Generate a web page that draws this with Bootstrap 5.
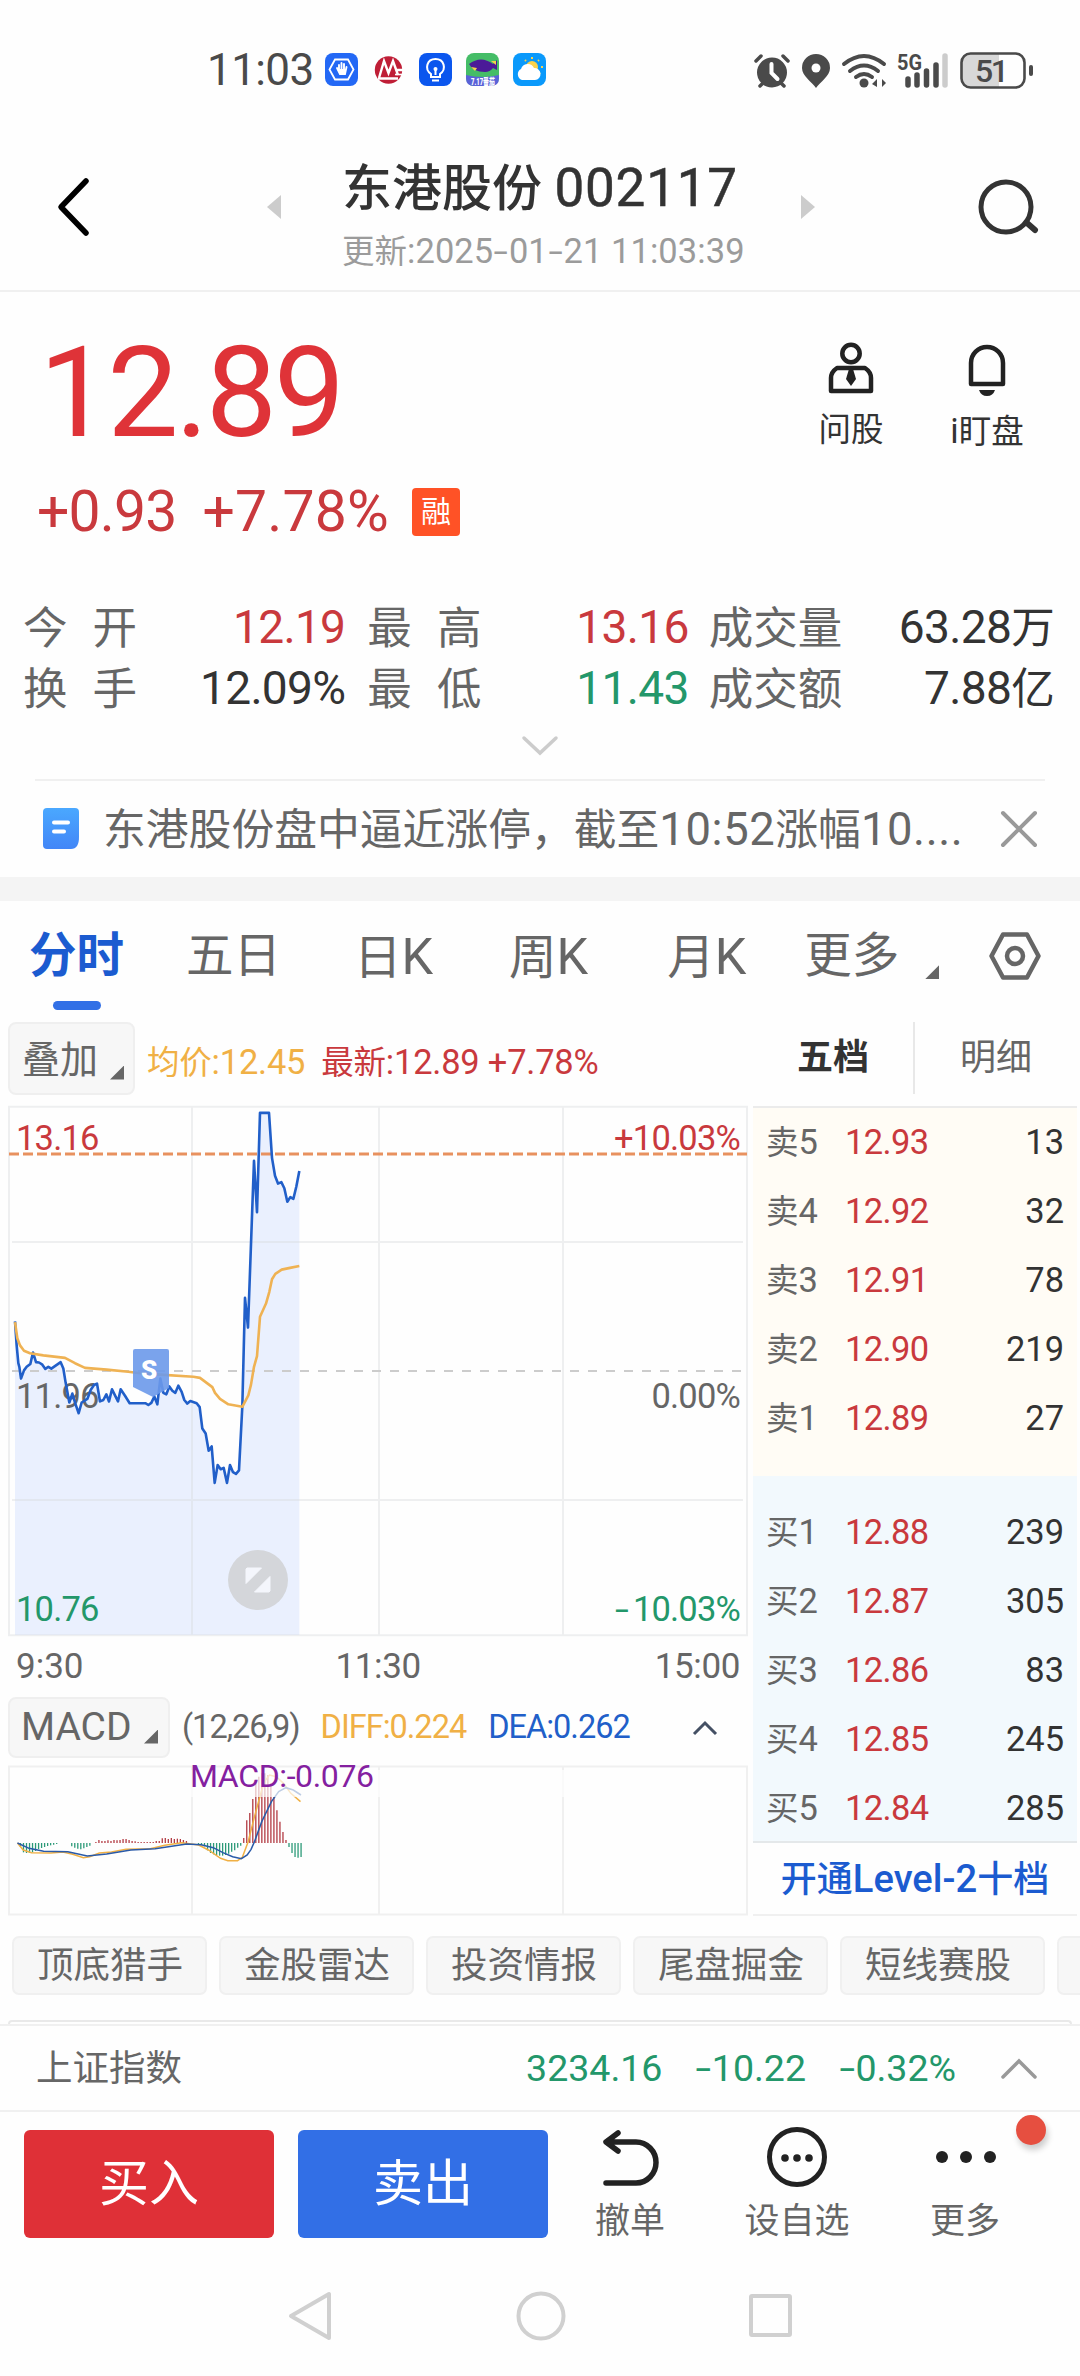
<!DOCTYPE html>
<html lang="zh-CN">
<head>
<meta charset="utf-8">
<meta name="viewport" content="width=device-width, initial-scale=1">
<title>东港股份 002117</title>
<link rel="stylesheet" href="https://cdn.jsdelivr.net/npm/bootstrap@5.3.0/dist/css/bootstrap.min.css">
<style>
:root{--up:#c9393d;--down:#23976a;--ink:#333;--sub:#666;--blue:#1b5bd0;--line:#f0f0f0}
html,body{width:1080px;height:2376px;overflow:hidden}
body{font-family:Roboto,"Noto Sans CJK SC",sans-serif;color:var(--ink);background:#fefefe;font-size:36px;line-height:1;white-space:nowrap}
svg{display:block;flex:none;overflow:visible}
.num{font-size:1.06em}
.hy{display:inline-block;transform:scaleX(1.5);margin:0 3px}
.up{color:var(--up)}.down{color:var(--down)}.sub{color:var(--sub)}
.status{height:139px;padding:0 47px 0 207px}
.clock{font-size:44px;color:#4a4a4a;width:118px;letter-spacing:-.6px}
.head{height:153px;border-bottom:2px solid var(--line);padding:0 41px 0 56px}
.titles{width:400px}
.title-main{font-size:50px;height:58px;line-height:58px;font-weight:500}
.title-main .num{font-weight:400;letter-spacing:.8px;-webkit-text-stroke:.5px var(--ink)}
.title-time{font-size:32.5px;height:40px;line-height:40px;color:#9b9b9b;margin-top:14px}
.title-time .num{letter-spacing:.1px}
.quote{height:287px;padding:46px 58px 0 41px}
.last-price{font-size:127px;line-height:110px;height:110px;color:#df3338;letter-spacing:-3.2px;margin-left:-2px}
.change{font-size:57px;height:60px;line-height:60px;margin-top:34px}
.tag-rong{width:48px;height:48px;line-height:48px;border-radius:4px;background:#ff5226;color:#fff;font-size:30px;text-align:center}
.tool{font-size:32.5px;width:96px}
.tool-label{margin-top:10px}
.stats{height:126px;padding:0 26px 0 25px;margin-top:18px}
.stat-line{height:61px}
.cell-a{width:321px;margin-right:24px}.cell-b{width:320px;margin-right:22px}.cell-c{width:344px}
.stats .key{font-size:44.5px;color:var(--sub);word-spacing:14px;margin-left:-2px;padding-top:3px}
.stats .val{font-size:43.5px;letter-spacing:-.7px}
.expand{height:56px;padding-top:12px}
.news{height:98px;margin:0 35px;border-top:2px solid var(--line);padding:0 8px}
.news-text{font-size:42.8px;color:#666;width:870px;margin-left:24px;padding-top:2px}
.news-text .num{letter-spacing:.6px}
.band{height:24px;background:#f4f4f4}
.ktabs{height:121px;padding:0 39px 0 29px;font-size:47.5px;color:var(--sub)}
.ktabs>div{height:110px;line-height:111px}
.ktabs .on{color:var(--blue);font-weight:700;position:relative}
.ktabs .on::after{content:"";position:absolute;left:24px;bottom:1px;width:48px;height:9px;border-radius:5px;background:#3270e6}
.chart-col{width:753px}
.book-col{width:324px}
.drop{background:#f7f7f7;border:2px solid #efefef;border-radius:8px;color:var(--sub);letter-spacing:0}
.info{height:84px}
.info .drop{width:127px;height:73px;margin:0 12px 0 8px;font-size:38px;padding:2px 9px 0 12px}
.tri{width:14px;height:14px;background:#666;clip-path:polygon(100% 0,100% 100%,0 100%)}
.axis{height:60px;font-size:35px;color:var(--sub);padding:0 13px 0 16px}
.macd-bar{height:69px;padding-bottom:6px;font-size:32.5px;letter-spacing:-1px}
.macd-bar .drop{width:162px;height:61px;margin-left:8px;font-size:39px;padding:0 10px 0 11px}
.book-tabs{height:84px;font-size:36px}
.book-tabs>div{width:50%;height:72px}
.sells{height:370px;background:#fffcf5;border-top:2px solid #ebebeb;box-sizing:border-box}
.buys{height:367px;background:#f2f9fd;border-bottom:2px solid #e4e8ea;padding-top:22px}
.lv{height:69px;padding:0 13px 0 13px;font-size:32.5px}
.lv .k{width:79px;color:var(--sub)}.lv .p{letter-spacing:-.6px;color:var(--up)}
.level2{height:73px;border-bottom:2px solid var(--line);font-size:36px;color:var(--blue);font-weight:500;padding-top:2px}
.pills{height:104px;padding:20px 0 0 12px;gap:12px;overflow:hidden}
.pill{flex:none;width:195px;height:59px;background:#f7f7f7;border:2px solid #f0f0f0;border-radius:7px;font-size:36.5px;color:var(--sub);padding-left:23px;line-height:56px}
.pill.wide{width:205px}
.sheet{height:4px;margin:0 8px;border:2px solid #e9e9e9;border-bottom:0;border-radius:8px 8px 0 0}
.index{height:88px;border-top:2px solid var(--line);border-bottom:2px solid var(--line);padding:2px 43px 0 36px}
.index .quote-row{gap:33px;margin-right:45px;font-size:37.5px}
.actions{height:145px;padding:18px 0 0 24px}
.trade{width:250px;height:108px;border-radius:6px;font-size:50px;color:#fff;border:0;line-height:105px;padding:0}
.act{width:168px;font-size:35px;color:var(--sub);position:relative}
.act:first-of-type{width:166px}
.act-label{margin-top:12px;margin-left:-2px}
.reddot{position:absolute;width:30px;height:30px;border-radius:50%;background:#e64f40;left:134px;top:-15px;box-shadow:2px 5px 6px #0003}
.act svg{height:62px}
.sysnav{height:118px}
svg text{font-family:Roboto,"Noto Sans CJK SC",sans-serif}
</style>
<script src="https://cdn.jsdelivr.net/npm/bootstrap@5.3.0/dist/js/bootstrap.bundle.min.js"></script>
</head>
<body>

<!-- system status -->
<div class="status d-flex align-items-center">
  <div class="clock">11:03</div>
  <svg width="221" height="34" viewBox="0 0 221 34">
    <rect width="33" height="33" rx="8" fill="#2368f5"/><path d="M10 6.500h13l5.500 10-5.500 10H10l-5.500-10z" fill="none" stroke="#fff" stroke-width="1.800"/><path d="M14 18v-6M16.500 18v-8M19 18v-7M12 15l3 6h5l1.500-7" stroke="#fff" stroke-width="1.900" fill="none" stroke-linecap="round"/><path d="M13.500 16h6.500v5h-5z" fill="#fff"/>
    <circle cx="63.500" cy="17" r="13.700" fill="#bf1e36"/><path d="M54 25l5-17 4.500 12L68 8l5 14M53 25.500h20M71 17h7" fill="none" stroke="#fff" stroke-width="2.400"/><path d="M70 21.500h8" stroke="#fff" fill="none" stroke-width="1.600"/>
    <rect x="94" width="33" height="33" rx="8" fill="#0b56ee"/><path d="M106 21c-7-5-4-15 4.500-15s11.500 10 4.500 15v3h-9zM107 27.500h7M110.500 16v6" fill="none" stroke="#fff" stroke-width="2"/><circle cx="110.500" cy="16" r="2" fill="#fff"/>
    <rect x="141" width="33" height="33" rx="8" fill="#45bd67"/><path d="M141 22q16 4 33 0v3q0 8-8 8h-17q-8 0-8-8z" fill="#5a62d8"/><path d="M144 11q12-9 24 0l4-4v10l-4-2q-3 4-8 4-12 0-16-8z" fill="#4b1a98"/><path d="M146 14l6 1-2 3zM166 8h5v4z" fill="#f4cf4c"/><text x="146" y="32" font-size="9" font-weight="900" fill="#fff" textLength="24" lengthAdjust="spacingAndGlyphs">7.17番茄</text>
    <rect x="188" width="33" height="33" rx="8" fill="#0a99fb"/><circle cx="207" cy="14" r="6" fill="#fbd34c"/><path d="M207 4v2M200 7l1 1M214 7l-1 1M216 14h2M214 20l1 1" stroke="#fbd34c" stroke-width="2"/><path d="M197 27a6 6 0 0 1-1-11 7 7 0 0 1 13-1 6 6 0 1 1 1 12z" fill="#fff"/>
  </svg>
  <svg class="ms-auto" width="280" height="38" viewBox="753 49 280 38">
    <g fill="none" stroke="#4a4a4a" stroke-linecap="round">
      <circle cx="772" cy="70.500" r="15" fill="#4a4a4a" stroke="none"/><path d="M756 59l5-5M788 59l-5-5M760 84l4-4M784 84l-4-4" stroke-width="3.500"/><path d="M771.500 62v9l6 6" stroke="#fff" stroke-width="4"/>
      <path d="M816 86c-4-6-14-12-14-20a14 14 0 0 1 28 0c0 8-10 14-14 20z" fill="#4a4a4a" stroke="none"/><circle cx="816" cy="66" r="4.500" fill="#fff" stroke="none"/>
      <path d="M844 62q20-16 40 0M850 69q14-11 28 0M856 75q8-6 16 0" stroke-width="4"/><circle cx="864" cy="81" r="4.500" fill="#4a4a4a" stroke="none"/><path d="M872 82l5-5v8zM886 81l-4-4v8z" fill="#4a4a4a" stroke="none"/>
      <path d="M908 77v6M917 73v10M926.500 69v14M936 63v20" stroke-width="5.500"/><path d="M945 54v29" stroke="#ccc" stroke-width="5.500"/>
      <path d="M970 52h29v33h-29q-8 0-8-8V60q0-8 8-8z" fill="#d8d8d8" stroke="none"/><rect x="961.500" y="51.500" width="63" height="34" rx="9" stroke-width="2.600"/><path d="M1031 65v7" stroke-width="4"/>
    </g>
    <text x="897" y="67.500" font-size="22" font-weight="700" fill="#4a4a4a" textLength="25" lengthAdjust="spacingAndGlyphs">5G</text>
    <text x="975" y="80" font-size="32" font-weight="500" fill="#4a4a4a" textLength="34">51</text>
  </svg>
</div>

<!-- title bar -->
<div class="head d-flex align-items-center">
  <svg width="34" height="62" viewBox="0 0 34 62" style="margin-bottom:16px"><path d="M30 5L5 31l25 26" fill="none" stroke="#000" stroke-width="5.500" stroke-linecap="round" stroke-linejoin="round"/></svg>
  <svg class="mb-3" width="14" height="24" viewBox="0 0 14 24" style="margin-left:177px"><path d="M14 0v24L0 12z" fill="#ccc"/></svg>
  <div class="titles" style="margin-left:61px">
    <div class="title-main">东港股份 <span class="num">002117</span></div>
    <div class="title-time">更新<span class="num">:2025<span class="hy">-</span>01<span class="hy">-</span>21 11:03:39</span></div>
  </div>
  <svg class="mb-3" width="14" height="24" viewBox="0 0 14 24" style="margin-left:59px"><path d="M0 0v24l14-12z" fill="#ccc"/></svg>
  <svg class="ms-auto mb-3" width="62" height="56" viewBox="0 0 62 56"><circle cx="29" cy="28" r="25" fill="none" stroke="#333" stroke-width="5"/><path d="M50 44l8 7" stroke="#333" stroke-width="6" stroke-linecap="round"/></svg>
</div>

<!-- last price -->
<div class="quote d-flex justify-content-between">
  <div>
    <div class="last-price">12.89</div>
    <div class="change up d-flex align-items-center"><span style="letter-spacing:-.8px;margin-left:-4px">+0.93</span><span style="letter-spacing:.2px;margin-left:26px">+7.78%</span><span class="tag-rong" style="margin-left:23px">融</span></div>
  </div>
  <div class="d-flex" style="gap:40px;margin-right:-13px">
    <div class="tool d-flex flex-column align-items-center">
      <svg width="48" height="66" viewBox="0 0 48 66"><g fill="none" stroke="#222" stroke-width="4.500"><circle cx="24" cy="15.500" r="8.700"/><path d="M10 30h28q6 4 6 10v13H4V40q0-6 6-10z" stroke-linejoin="round"/></g><path d="M22 31h4l3 10-5 7-5-7z" fill="#222"/></svg>
      <div class="tool-label">问股</div>
    </div>
    <div class="tool d-flex flex-column align-items-center">
      <svg width="48" height="66" viewBox="0 0 48 66"><path d="M8 46V25a16 16 0 0 1 32 0v21z" fill="none" stroke="#222" stroke-width="4.500" stroke-linejoin="round"/><path d="M16 52h16q-2 6-8 6t-8-6z" fill="#222"/></svg>
      <div class="tool-label"><span class="num">i</span>盯盘</div>
    </div>
  </div>
</div>

<!-- key figures -->
<div class="stats">
  <div class="stat-line d-flex align-items-center">
    <div class="cell-a d-flex justify-content-between"><span class="key">今 开</span><span class="val up"><span class="num">12.19</span></span></div>
    <div class="cell-b d-flex justify-content-between"><span class="key">最 高</span><span class="val up"><span class="num">13.16</span></span></div>
    <div class="cell-c d-flex justify-content-between"><span class="key">成交量</span><span class="val"><span class="num">63.28</span>万</span></div>
  </div>
  <div class="stat-line d-flex align-items-center">
    <div class="cell-a d-flex justify-content-between"><span class="key">换 手</span><span class="val"><span class="num">12.09%</span></span></div>
    <div class="cell-b d-flex justify-content-between"><span class="key">最 低</span><span class="val down"><span class="num">11.43</span></span></div>
    <div class="cell-c d-flex justify-content-between"><span class="key">成交额</span><span class="val"><span class="num">7.88</span>亿</span></div>
  </div>
</div>
<div class="expand d-flex justify-content-center"><svg width="38" height="22" viewBox="0 0 38 22"><path d="M3 3l16 15L35 3" fill="none" stroke="#ccc" stroke-width="3.500" stroke-linecap="round"/></svg></div>
<div class="news d-flex align-items-center">
  <svg width="36" height="42" viewBox="0 0 36 42"><defs><linearGradient id="doc" x2="0" y2="1"><stop stop-color="#4aa8ff"/><stop offset="1" stop-color="#4286f7"/></linearGradient></defs><path d="M4 0h28q4 0 4 4v25q0 12-8 12H4q-4 0-4-4V4q0-4 4-4z" fill="url(#doc)"/><path d="M11 14.500h14M11 23.500h10" stroke="#fff" stroke-width="4" stroke-linecap="round"/></svg>
  <div class="news-text">东港股份盘中逼近涨停，截至<span class="num">10:52</span>涨幅<span class="num">10....</span></div>
  <svg class="ms-auto" width="36" height="36" viewBox="0 0 36 36"><path d="M2 2l32 32M34 2L2 34" stroke="#999" stroke-width="4" stroke-linecap="round"/></svg>
</div>
<div class="band"></div>

<!-- period tabs -->
<div class="ktabs d-flex align-items-start">
  <div class="on">分时</div>
  <div style="margin-left:62px">五日</div>
  <div style="margin-left:73px">日<span class="num">K</span></div>
  <div style="margin-left:76px">周<span class="num">K</span></div>
  <div style="margin-left:79px">月<span class="num">K</span></div>
  <div style="margin-left:58px">更多</div>
  <div style="margin-left:26px;padding-top:64px"><div class="tri"></div></div>
  <svg class="ms-auto" width="52" height="48" viewBox="0 0 52 48" style="margin-top:31px"><path d="M14 2.500h24L49.500 24 38 45.500H14L2.500 24z" fill="none" stroke="#666" stroke-width="4.500" stroke-linejoin="round"/><circle cx="26" cy="24" r="8" fill="none" stroke="#666" stroke-width="4.500"/></svg>
</div>

<div class="d-flex">
  <div class="chart-col">
    <div class="info d-flex align-items-start">
      <div class="drop d-flex align-items-center justify-content-between">叠加<span class="tri" style="margin-top:26px"></span></div>
      <div class="d-flex align-items-center" style="height:80px;font-size:32.500px;gap:16px;letter-spacing:-.2px">
        <span style="color:#f0b045">均价<span class="num">:12.45</span></span>
        <span class="up">最新<span class="num">:12.89 +7.78%</span></span>
      </div>
    </div>
    <!-- intraday price -->
    <svg width="750" height="530" viewBox="0 0 750 530">
      <g transform="translate(0,-16) scale(.33333,.357143)">
        <path d="M45 1526V648L50 715 55 765 58 775 63 808 72 785 80 775 91 767 99 735 108 762 117 763 126 768 136 781 145 775 154 780 182 762 190 780 197 820 208 875 217 850 226 878 236 905 245 875 262 865 272 840 282 826 291 822 300 872 310 868 319 852 327 872 336 838 345 855 354 872 362 838 375 856 389 877 436 877 445 882 454 876 463 858 472 880 481 808 490 848 499 852 508 830 517 842 526 848 535 828 545 845 553 868 562 878 571 871 590 877 599 888 607 948 617 962 626 1010 635 998 644 1100 653 1050 662 1062 671 1058 681 1100 690 1050 699 1070 708 1075 717 1065 727 885 735 582 744 665 762 198 771 342 780 64 807 64 816 190 825 240 834 262 844 258 853 275 862 313 871 300 880 305 889 270 898 227V1526z" fill="#eaf0fe"/>
      </g>
      <path d="M9 .8h738v528.400H9zM192 1v528M379 1v528M563 1v528M12 136h731M12 394h731" fill="none" stroke="#d8dadd" stroke-opacity=".4" stroke-width="2"/>
      <path d="M12 265h731" stroke="#ccc" stroke-width="2" stroke-dasharray="9 9"/>
      <path d="M9 48h738" stroke="#e8915f" stroke-width="3" stroke-dasharray="10 4"/>
      <g font-size="34.500" letter-spacing="-.8">
        <g><text x="16" y="44" fill="#c9393d">13.16</text><text x="16" y="302" fill="#666">11.96</text><text x="16" y="515" fill="#23976a">10.76</text></g>
        <g text-anchor="end"><text x="740" y="44" fill="#c9393d">+10.03%</text><text x="740" y="302" fill="#666">0.00%</text><text x="740" y="515" fill="#23976a">10.03%</text></g>
        <text transform="translate(615 515) scale(1.450 1)" fill="#23976a">-</text>
      </g>
      <g transform="translate(0,-16) scale(.33333,.357143)" fill="none" stroke-linejoin="round">
        <path vector-effect="non-scaling-stroke" stroke="#215fc9" stroke-width="2.600" d="M45 648L50 715 55 765 58 775 63 808 72 785 80 775 91 767 99 735 108 762 117 763 126 768 136 781 145 775 154 780 182 762 190 780 197 820 208 875 217 850 226 878 236 905 245 875 262 865 272 840 282 826 291 822 300 872 310 868 319 852 327 872 336 838 345 855 354 872 362 838 375 856 389 877 436 877 445 882 454 876 463 858 472 880 481 808 490 848 499 852 508 830 517 842 526 848 535 828 545 845 553 868 562 878 571 871 590 877 599 888 607 948 617 962 626 1010 635 998 644 1100 653 1050 662 1062 671 1058 681 1100 690 1050 699 1070 708 1075 717 1065 727 885 735 582 744 665 762 198 771 342 780 64 807 64 816 190 825 240 834 262 844 258 853 275 862 313 871 300 880 305 889 270 898 227"/>
        <path vector-effect="non-scaling-stroke" stroke="#efb253" stroke-width="2.600" d="M45 650L52 695 60 715 72 730 90 737 130 743 195 750 225 765 255 778 320 783 385 789 420 793 480 797 580 803 600 806 620 820 637 832 645 848 660 865 685 880 727 887 745 855 753 825 762 775 771 745 780 635 798 598 808 565 816 530 826 515 845 503 870 498 898 493"/>
      </g>
      <path d="M135 243h32q2 0 2 2v37l-16 9-20-10v-36q0-2 2-2z" fill="#6c99ea" fill-opacity=".9"/>
      <text x="141" y="273" font-size="26" font-weight="900" fill="#fff">S</text>
      <circle cx="258" cy="474" r="30" fill="#d4d6da"/>
      <path d="M247 462h14.500l-15.500 15.500V463zM269 486h-14.500L270 470.500V485z" fill="#f4f6fc" stroke="#f4f6fc" stroke-linejoin="round"/>
    </svg>
    <div class="axis d-flex justify-content-between align-items-center"><span>9:30</span><span style="margin-left:18px;letter-spacing:-.4px">11:30</span><span style="letter-spacing:-.4px">15:00</span></div>
    <div class="macd-bar d-flex align-items-center">
      <div class="drop d-flex align-items-center justify-content-between">MACD<span class="tri" style="margin-top:18px"></span></div>
      <span class="sub" style="margin-left:12px">(12,26,9)</span>
      <span style="color:#f0b045;margin-left:21px">DIFF:0.224</span>
      <span style="color:#215fc9;margin-left:22px">DEA:0.262</span>
      <svg class="ms-auto" width="28" height="16" viewBox="0 0 28 16" style="margin-right:34px"><path d="M3 14L14 3l11 11" fill="none" stroke="#445064" stroke-width="3"/></svg>
    </div>
    <!-- MACD histogram and curves -->
    <svg width="750" height="151" viewBox="0 0 750 151">
      <path d="M9 1.500h738v148H9zM192 2v148M379 2v148M563 2v148" fill="none" stroke="#f0f0f0" stroke-width="2"/>
      <g transform="translate(0,-145) scale(.4847,.33333)">
        <g id="bars"></g>
        <g fill="none">
          <path vector-effect="non-scaling-stroke" stroke="#f0b045" stroke-width="1.500" d="M36 669L48 690 65 698 105 699 130 696 150 703 172 713 185 710 205 699 230 696 260 688 310 686 340 676 375 668 410 675 430 690 455 715 470 722 490 722 500 712 512 665 525 590 540 510 548 480 556 465 570 470 585 490 600 520 620 545"/>
          <path vector-effect="non-scaling-stroke" stroke="#2a5aa8" stroke-width="1.500" d="M36 669L60 685 90 694 140 695 180 708 220 702 270 690 320 686 385 672 415 674 440 683 460 698 480 710 498 716 510 705 518 688 525 665 540 605 560 545 575 515 590 503 605 510 621 525"/>
        </g>
      </g>
      <path d="M188 5h555v27H188z" fill="#fefefe" fill-opacity=".7"/>
      <text x="190" y="22" font-size="32" fill="#8420a0" textLength="184">MACD:-0.076</text>
    </svg>
  </div>

  <!-- order book -->
  <div class="book-col">
    <div class="book-tabs d-flex"><div class="d-flex align-items-center justify-content-center fw-bold" style="border-right:2px solid #e8e8e8">五档</div><div class="d-flex align-items-center justify-content-center sub">明细</div></div>
    <div class="sells">
      <div class="lv d-flex align-items-center"><span class="k">卖<span class="num">5</span></span><span class="num p">12.93</span><span class="num ms-auto">13</span></div>
      <div class="lv d-flex align-items-center"><span class="k">卖<span class="num">4</span></span><span class="num p">12.92</span><span class="num ms-auto">32</span></div>
      <div class="lv d-flex align-items-center"><span class="k">卖<span class="num">3</span></span><span class="num p">12.91</span><span class="num ms-auto">78</span></div>
      <div class="lv d-flex align-items-center"><span class="k">卖<span class="num">2</span></span><span class="num p">12.90</span><span class="num ms-auto">219</span></div>
      <div class="lv d-flex align-items-center"><span class="k">卖<span class="num">1</span></span><span class="num p">12.89</span><span class="num ms-auto">27</span></div>
    </div>
    <div class="buys">
      <div class="lv d-flex align-items-center"><span class="k">买<span class="num">1</span></span><span class="num p">12.88</span><span class="num ms-auto">239</span></div>
      <div class="lv d-flex align-items-center"><span class="k">买<span class="num">2</span></span><span class="num p">12.87</span><span class="num ms-auto">305</span></div>
      <div class="lv d-flex align-items-center"><span class="k">买<span class="num">3</span></span><span class="num p">12.86</span><span class="num ms-auto">83</span></div>
      <div class="lv d-flex align-items-center"><span class="k">买<span class="num">4</span></span><span class="num p">12.85</span><span class="num ms-auto">245</span></div>
      <div class="lv d-flex align-items-center"><span class="k">买<span class="num">5</span></span><span class="num p">12.84</span><span class="num ms-auto">285</span></div>
    </div>
    <div class="level2 d-flex align-items-center justify-content-center"><span>开通<span class="num">Level-2</span>十档</span></div>
  </div>
</div>

<div class="pills d-flex">
  <div class="pill">顶底猎手</div><div class="pill">金股雷达</div><div class="pill">投资情报</div><div class="pill">尾盘掘金</div><div class="pill wide">短线赛股</div><div class="pill"></div>
</div>
<div class="sheet"></div>
<div class="index d-flex align-items-center">
  <span class="sub" style="font-size:36.500px">上证指数</span>
  <div class="quote-row d-flex ms-auto down"><span>3234.16</span><span><span class="hy">-</span>10.22</span><span><span class="hy">-</span>0.32%</span></div>
  <svg width="36" height="22" viewBox="0 0 36 22"><path d="M2 19L18 3l16 16" fill="none" stroke="#999" stroke-width="3.500" stroke-linecap="round"/></svg>
</div>

<!-- trade actions -->
<div class="actions d-flex">
  <button class="trade btn" style="background:#df3037">买入</button>
  <button class="trade btn" style="background:#326fe6;margin-left:24px">卖出</button>
  <div class="act d-flex flex-column align-items-center">
    <svg width="62" viewBox="0 0 62 62"><path d="M18 3L6 12l12 9M8 12h28a20 20.500 0 0 1 0 41H6" fill="none" stroke="#222" stroke-width="5.500" stroke-linecap="round" stroke-linejoin="round"/></svg><div class="act-label">撤单</div></div>
  <div class="act d-flex flex-column align-items-center">
    <svg width="62" viewBox="0 0 62 62"><circle cx="30" cy="27" r="27.500" fill="none" stroke="#222" stroke-width="5"/><g fill="#222"><circle cx="18" cy="28" r="3.800"/><circle cx="30" cy="28" r="3.800"/><circle cx="42" cy="28" r="3.800"/></g></svg><div class="act-label">设自选</div></div>
  <div class="act d-flex flex-column align-items-center">
    <svg width="62" viewBox="0 0 62 62"><g fill="#222"><circle cx="7" cy="27" r="6"/><circle cx="31" cy="27" r="6"/><circle cx="55" cy="27" r="6"/></g></svg><div class="act-label">更多</div><span class="reddot"></span></div>
</div>

<!-- system navigation -->
<div class="sysnav d-flex align-items-center justify-content-center">
  <svg width="504" height="50" viewBox="287 2291 504 50"><g fill="none" stroke="#d0d0d0" stroke-width="4" stroke-linejoin="round"><path d="M328 2294v44l-38-22z"/><circle cx="540" cy="2316" r="22.500"/><rect x="750" y="2296" width="39" height="39" rx="1"/></g></svg>
</div>

<script>
// MACD histogram, one value per minute from 9:30
const macd=[0,-12,-28,-30,-30,-28,-24,-18,-15,-12,-9,-7,-5,-3,0,0,0,0,-10,-14,-17,-19,-16,-12,-8,0,3,9,6,6,8,6,9,8,9,12,12,9,6,5,3,3,3,3,3,3,6,6,14,15,12,15,12,13,12,9,6,0,0,0,-3,-5,-10,-22,-30,-34,-36,-38,-38,-36,-32,-26,-22,-14,-8,15,68,90,132,179,199,209,209,204,179,138,98,64,33,9,-12,-30,-42,-44,-42];
document.getElementById('bars').innerHTML=macd.map((v,i)=>{const x=36+i*6.225;return `<path vector-effect="non-scaling-stroke" stroke="${v>0?'#b23a42':'#2c9a78'}" stroke-width="1.300" d="M${x} 669V${669-v}"/>`}).join('');
</script>
</body>
</html>
